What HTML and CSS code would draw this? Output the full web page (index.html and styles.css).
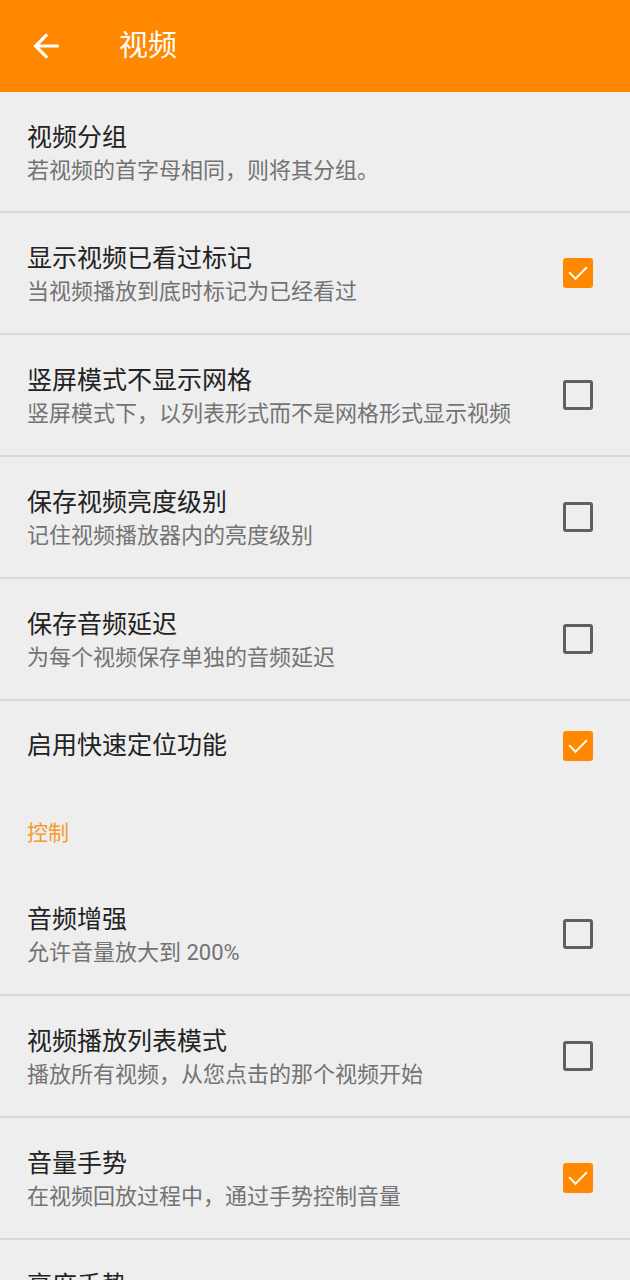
FILE: index.html
```html
<!DOCTYPE html>
<html lang="zh">
<head>
  <meta charset="UTF-8">
  <meta name="viewport" content="width=device-width, initial-scale=1.0">
  <title>视频</title>
  <link rel="stylesheet" href="styles.css">
</head>
<body>
  <div class="toolbar">
    <svg class="back-icon" viewBox="0 0 24 24" width="38" height="38">
      <path d="M20 11H7.83l5.59-5.59L12 4l-8 8 8 8 1.41-1.41L7.83 13H20v-2z" fill="#fff"/>
    </svg>
    <div class="toolbar-title">视频</div>
  </div>

  <div class="prefs">
    <div class="pref first">
      <div class="pref-text">
        <div class="pref-title">视频分组</div>
        <div class="pref-summary">若视频的首字母相同，则将其分组。</div>
      </div>
    </div>
    <div class="pref">
      <div class="pref-text">
        <div class="pref-title">显示视频已看过标记</div>
        <div class="pref-summary">当视频播放到底时标记为已经看过</div>
      </div>
      <div class="checkbox checked"></div>
    </div>
    <div class="pref">
      <div class="pref-text">
        <div class="pref-title">竖屏模式不显示网格</div>
        <div class="pref-summary">竖屏模式下，以列表形式而不是网格形式显示视频</div>
      </div>
      <div class="checkbox"></div>
    </div>
    <div class="pref">
      <div class="pref-text">
        <div class="pref-title">保存视频亮度级别</div>
        <div class="pref-summary">记住视频播放器内的亮度级别</div>
      </div>
      <div class="checkbox"></div>
    </div>
    <div class="pref">
      <div class="pref-text">
        <div class="pref-title">保存音频延迟</div>
        <div class="pref-summary">为每个视频保存单独的音频延迟</div>
      </div>
      <div class="checkbox"></div>
    </div>
    <div class="pref single last">
      <div class="pref-text">
        <div class="pref-title">启用快速定位功能</div>
      </div>
      <div class="checkbox checked"></div>
    </div>

    <div class="category">控制</div>

    <div class="pref">
      <div class="pref-text">
        <div class="pref-title">音频增强</div>
        <div class="pref-summary">允许音量放大到 200%</div>
      </div>
      <div class="checkbox"></div>
    </div>
    <div class="pref">
      <div class="pref-text">
        <div class="pref-title">视频播放列表模式</div>
        <div class="pref-summary">播放所有视频，从您点击的那个视频开始</div>
      </div>
      <div class="checkbox"></div>
    </div>
    <div class="pref">
      <div class="pref-text">
        <div class="pref-title">音量手势</div>
        <div class="pref-summary">在视频回放过程中，通过手势控制音量</div>
      </div>
      <div class="checkbox checked"></div>
    </div>
    <div class="pref">
      <div class="pref-text">
        <div class="pref-title">亮度手势</div>
        <div class="pref-summary">在视频回放过程中，通过手势控制亮度</div>
      </div>
      <div class="checkbox checked"></div>
    </div>
  </div>
</body>
</html>
```

FILE: styles.css
```css
body {
  margin: 0;
  padding: 0;
  background-color: #eeeeee;
  font-family: Roboto, "Noto Sans CJK SC", sans-serif;
  overflow: hidden;
}

.toolbar {
  height: 92px;
  background-color: #ff8800;
  display: flex;
  align-items: center;
}

.back-icon {
  margin-left: 27px;
  flex-shrink: 0;
}

.toolbar-title {
  margin-left: 54px;
  color: #fff;
  font-size: 29px;
  line-height: 1;
}

.pref {
  display: flex;
  align-items: center;
  padding: 0 37px 0 27px;
  height: 120px;
  border-bottom: 2px solid #d8d8d8;
}

.pref.first {
  height: 119px;
}

.pref.single {
  height: 90px;
}

.pref.last {
  border-bottom: none;
}

.pref-text {
  flex-grow: 1;
  padding-top: 4px;
}

.pref.single .pref-text {
  padding-top: 0;
}

.pref-title {
  font-size: 25px;
  line-height: 34px;
  color: #222222;
}

.pref-summary {
  font-size: 22px;
  line-height: 32px;
  color: #737373;
}

.checkbox {
  width: 30px;
  height: 30px;
  box-sizing: border-box;
  border: 3px solid #5f5f5f;
  border-radius: 3px;
  flex-shrink: 0;
  position: relative;
}

.checkbox.checked {
  border: none;
  background-color: #ff8800;
}

.checkbox.checked::after {
  content: "";
  position: absolute;
  left: 10px;
  top: 4px;
  width: 8px;
  height: 15px;
  border-right: 2.5px solid #fff;
  border-bottom: 2.5px solid #fff;
  transform: rotate(45deg);
}

.category {
  height: 83px;
  box-sizing: border-box;
  padding: 27px 27px 0;
  font-size: 21px;
  line-height: 30px;
  color: #f39c2b;
}
```
